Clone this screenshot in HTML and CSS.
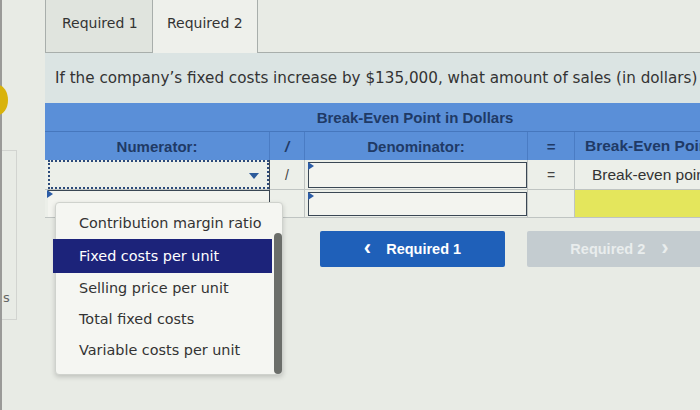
FILE: index.html
```html
<!DOCTYPE html>
<html>
<head>
<meta charset="utf-8">
<link rel="stylesheet" href="styles.css">
</head>
<body>
<div class="page">
  <div class="gutter">
    <div class="dot"></div>
    <div class="sidepanel"><span class="sidechar">s</span></div>
  </div>
  <div class="main">
    <div class="tabs">
      <div class="tab tab-off">Required 1</div>
      <div class="tab tab-on">Required 2</div>
      <div class="tabfill"></div>
    </div>
    <div class="question">If the company’s fixed costs increase by $135,000, what amount of sales (in dollars)</div>
    <div class="grid">
      <div class="h1 span">Break-Even Point in Dollars</div>
      <div class="h2">Numerator:</div>
      <div class="h2 op">/</div>
      <div class="h2">Denominator:</div>
      <div class="h2 op">=</div>
      <div class="h2 left">Break-Even Point</div>

      <div class="d c1"><div class="select"><span class="arrow"></span></div></div>
      <div class="d op">/</div>
      <div class="d c3"><div class="input"><span class="mark"></span></div></div>
      <div class="d op">=</div>
      <div class="d label">Break-even point</div>

      <div class="d c1 r2"><div class="input in1"><span class="mark"></span></div></div>
      <div class="d op r2"></div>
      <div class="d c3 r2"><div class="input"><span class="mark"></span></div></div>
      <div class="d op r2"></div>
      <div class="d yellow r2"></div>
    </div>
    <div class="nav">
      <div class="btn btn-blue"><span class="chev">&lsaquo;</span>Required 1</div>
      <div class="btn btn-grey">Required 2<span class="chev chev-r">&rsaquo;</span></div>
    </div>
    <div class="menu">
      <div class="item">Contribution margin ratio</div>
      <div class="item sel">Fixed costs per unit</div>
      <div class="item">Selling price per unit</div>
      <div class="item">Total fixed costs</div>
      <div class="item">Variable costs per unit</div>
      <div class="scroll"></div>
    </div>
  </div>
</div>
</body>
</html>
```
FILE: styles.css
```css
html, body {
  margin: 0;
  padding: 0;
}
body {
  width: 700px;
  height: 410px;
  overflow: hidden;
  background: #e8ebe5;
  font-family: "DejaVu Sans", Verdana, sans-serif;
  color: #333;
}
.page {
  display: flex;
  height: 410px;
}
.gutter {
  width: 45px;
  flex: none;
  position: relative;
  border-left: 2px solid #9a9a98;
  box-sizing: border-box;
}
.dot {
  position: absolute;
  left: -14px;
  top: 85px;
  width: 20px;
  height: 30px;
  border-radius: 50%;
  background: #d9b30c;
}
.sidepanel {
  position: absolute;
  left: 0;
  top: 150px;
  width: 14px;
  height: 168px;
  border: 1px solid #d2d4d0;
  border-left: none;
}
.sidechar {
  position: absolute;
  left: 1px;
  top: 139px;
  font-size: 13px;
  color: #666;
}
.main {
  flex: none;
  width: 740px;
  position: relative;
}
.tabs {
  display: flex;
  height: 53px;
}
.tab {
  box-sizing: border-box;
  height: 53px;
  font-size: 14px;
  color: #333;
  padding-top: 15px;
  padding-left: 16px;
  border: 1px solid #a8aeab;
  border-top: none;
}
.tab-off {
  width: 108px;
  background: #e0e4de;
}
.tab-on {
  width: 105px;
  background: #eef0eb;
  border-left: none;
  border-bottom: none;
  padding-left: 14px;
}
.tabfill {
  flex: 1;
  border-bottom: 1px solid #a8aeab;
}
.question {
  height: 50px;
  box-sizing: border-box;
  background: #dbe4e3;
  padding: 16px 0 0 10px;
  font-size: 15.2px;
  color: #333;
  white-space: nowrap;
}
.grid {
  display: grid;
  grid-template-columns: 225px 35px 223px 47px 210px;
  grid-template-rows: 29px 28px 30px 28px;
}
.h1, .h2 {
  background: #5a8fd8;
  color: #1f3a66;
  font-family: "Liberation Sans", Arial, sans-serif;
  font-weight: bold;
  font-size: 15px;
  display: flex;
  align-items: center;
  justify-content: center;
}
.span {
  grid-column: 1 / 6;
  border-bottom: 1px solid #4677bd;
}
.h2 {
  border-right: 1px solid #4a7cc4;
}
.h2.left {
  justify-content: flex-start;
  padding-left: 10px;
  font-size: 15.5px;
}
.op {
  font-family: "Liberation Sans", Arial, sans-serif;
  font-weight: normal;
  font-style: italic;
}
.h2.op {
  font-weight: bold;
}
.d {
  background: #ecefe9;
  border-right: 1px solid #bfc4c2;
  border-bottom: 1px solid #bfc4c2;
  display: flex;
  align-items: center;
  justify-content: center;
  box-sizing: border-box;
  position: relative;
  font-family: "Liberation Sans", Arial, sans-serif;
  font-size: 14px;
  color: #444;
}
.d.op {
  font-style: normal;
}
.d.c1 {
  padding: 0 0 0 3px;
  align-items: stretch;
  border-right: 1px solid #3c4652;
}
.select {
  flex: 1;
  border: 2px dotted #2c4a7a;
  position: relative;
}
.arrow {
  position: absolute;
  right: 8px;
  top: 11px;
  width: 0;
  height: 0;
  border-left: 5px solid transparent;
  border-right: 5px solid transparent;
  border-top: 6px solid #2c5a9a;
}
.d.c3 {
  padding: 2px 0 1px 3px;
  align-items: stretch;
}
.input {
  flex: 1;
  border: 1px solid #3a4754;
  background: #f3f4ef;
  position: relative;
}
.in1 {
  border: none;
  border-top: 1px solid #3a4754;
}
.mark {
  position: absolute;
  left: -1px;
  top: -1px;
  width: 0;
  height: 0;
  border-top: 4px solid transparent;
  border-bottom: 4px solid transparent;
  border-left: 6px solid #2b5ca6;
}
.d.label {
  justify-content: flex-start;
  padding-left: 17px;
  color: #333;
  font-size: 15.5px;
}
.yellow {
  background: #e4e65c;
}
.nav {
  display: flex;
  gap: 22px;
  padding: 13px 0 0 275px;
}
.btn {
  width: 185px;
  height: 36px;
  box-sizing: border-box;
  border-radius: 2px;
  display: flex;
  align-items: center;
  justify-content: center;
  font-family: "Liberation Sans", Arial, sans-serif;
  font-weight: bold;
  font-size: 14.5px;
}
.btn-blue {
  background: #1f60b9;
  color: #fff;
}
.btn-grey {
  background: #c4ccd0;
  color: #e9eded;
}
.chev {
  font-size: 22px;
  margin-right: 15px;
  margin-top: -3px;
}
.chev-r {
  margin-right: 0;
  margin-left: 16px;
}
.menu {
  position: absolute;
  left: 10px;
  top: 202px;
  width: 228px;
  height: 173px;
  box-sizing: border-box;
  background: #f5f6f2;
  border: 1px solid #cfd2cd;
  border-radius: 4px;
  box-shadow: 0 2px 5px rgba(0,0,0,0.18);
  padding-top: 5px;
}
.item {
  height: 31px;
  line-height: 31px;
  padding-left: 23px;
  font-size: 14.4px;
  color: #333;
  white-space: nowrap;
}
.item.sel {
  background: #1c237a;
  color: #fff;
  margin-left: -3px;
  margin-right: 10px;
  padding-left: 26px;
  height: 34px;
  line-height: 34px;
}
.scroll {
  position: absolute;
  right: 0px;
  top: 30px;
  width: 8px;
  height: 141px;
  border-radius: 4px;
  background: #6b6e6a;
}
```
